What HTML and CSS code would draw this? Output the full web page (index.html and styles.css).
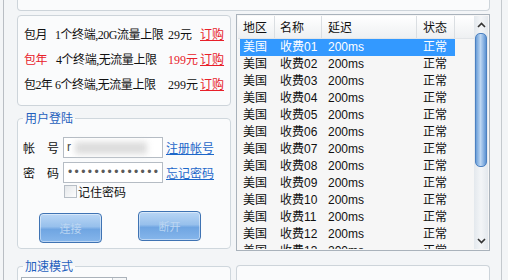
FILE: index.html
```html
<!DOCTYPE html>
<html lang="zh-CN">
<head>
<meta charset="utf-8">
<title>加速器</title>
<link rel="stylesheet" href="styles.css">
</head>
<body>
<div class="win">
  <div class="top-panel"></div>
  <div class="main">
    <div class="left-col">
      <div class="panel plans">
        <div class="plan"><span class="name">包月</span><span class="desc">1个终端,20G流量上限</span><span>29元</span><a class="buy">订购</a></div>
        <div class="plan"><span class="name red">包年</span><span class="desc d2">4个终端,无流量上限</span><span class="red">199元</span><a class="buy">订购</a></div>
        <div class="plan"><span class="name">包2年</span><span class="desc">6个终端,无流量上限</span><span>299元</span><a class="buy">订购</a></div>
      </div>
      <fieldset class="group login">
        <legend>用户登陆</legend>
        <div class="frow"><span class="lbl">帐　号</span><div class="inp">r<span class="blur"></span></div><a class="link">注册帐号</a></div>
        <div class="frow"><span class="lbl">密　码</span><div class="inp pwd">••••••••••••••</div><a class="link">忘记密码</a></div>
        <div class="remember"><span class="cb"></span><span>记住密码</span></div>
        <div class="btns"><span class="btn b1">连接</span><span class="btn b2">断开</span></div>
      </fieldset>
      <fieldset class="group mode">
        <legend>加速模式</legend>
        <div class="combo"><span class="drop"></span></div>
      </fieldset>
    </div>
    <div class="right-col">
      <div class="list">
        <div class="list-body">
          <div class="lhead"><span class="c1">地区</span><span class="c2">名称</span><span class="c3">延迟</span><span class="c4">状态</span><span class="cx"></span></div>
          <div class="lrow sel"><span class="c1">美国</span><span class="c2">收费01</span><span class="c3">200ms</span><span class="c4">正常</span></div>
          <div class="lrow"><span class="c1">美国</span><span class="c2">收费02</span><span class="c3">200ms</span><span class="c4">正常</span></div>
          <div class="lrow"><span class="c1">美国</span><span class="c2">收费03</span><span class="c3">200ms</span><span class="c4">正常</span></div>
          <div class="lrow"><span class="c1">美国</span><span class="c2">收费04</span><span class="c3">200ms</span><span class="c4">正常</span></div>
          <div class="lrow"><span class="c1">美国</span><span class="c2">收费05</span><span class="c3">200ms</span><span class="c4">正常</span></div>
          <div class="lrow"><span class="c1">美国</span><span class="c2">收费06</span><span class="c3">200ms</span><span class="c4">正常</span></div>
          <div class="lrow"><span class="c1">美国</span><span class="c2">收费07</span><span class="c3">200ms</span><span class="c4">正常</span></div>
          <div class="lrow"><span class="c1">美国</span><span class="c2">收费08</span><span class="c3">200ms</span><span class="c4">正常</span></div>
          <div class="lrow"><span class="c1">美国</span><span class="c2">收费09</span><span class="c3">200ms</span><span class="c4">正常</span></div>
          <div class="lrow"><span class="c1">美国</span><span class="c2">收费10</span><span class="c3">200ms</span><span class="c4">正常</span></div>
          <div class="lrow"><span class="c1">美国</span><span class="c2">收费11</span><span class="c3">200ms</span><span class="c4">正常</span></div>
          <div class="lrow"><span class="c1">美国</span><span class="c2">收费12</span><span class="c3">200ms</span><span class="c4">正常</span></div>
          <div class="lrow"><span class="c1">美国</span><span class="c2">收费13</span><span class="c3">200ms</span><span class="c4">正常</span></div>
        </div>
        <div class="sb">
          <div class="sb-btn"><svg width="9" height="6" viewBox="0 0 9 6"><polyline points="1,5 4.5,1.5 8,5" fill="none" stroke="#333" stroke-width="1.6"/></svg></div>
          <div class="sb-thumb"></div>
          <div class="sb-track"></div>
          <div class="sb-btn"><svg width="9" height="6" viewBox="0 0 9 6"><polyline points="1,1 4.5,4.5 8,1" fill="none" stroke="#333" stroke-width="1.6"/></svg></div>
        </div>
      </div>
      <div class="panel rbottom"></div>
    </div>
  </div>
</div>
</body>
</html>
```

FILE: styles.css
```css
* { box-sizing: border-box; }
html, body { margin: 0; padding: 0; }
body {
  background: #f3f5f7;
  font-family: "Liberation Sans", "Noto Sans CJK SC", sans-serif;
  font-size: 12px;
  color: #111;
  width: 508px;
  height: 280px;
  overflow: hidden;
}
.win {
  margin-left: 3px;
  width: 499px;
  height: 280px;
  border-left: 1px solid #b9bec4;
  border-right: 1px solid #c4c9ce;
  padding: 0 11px 0 13px;
  overflow: hidden;
}
.panel {
  border: 1px solid #cdd4da;
  border-radius: 4px;
  background: #fafbfc;
}
.top-panel {
  height: 11px;
  border: 1px solid #cdd4da;
  border-top: none;
  border-radius: 0 0 4px 4px;
  background: #fafbfc;
  margin-bottom: 3px;
}
.main { display: flex; gap: 5px; }
.left-col { width: 214px; display: flex; flex-direction: column; }
.right-col { width: 254px; display: flex; flex-direction: column; }

/* plans */
.plans {
  margin-top: 1px;
  height: 91px;
  padding: 7px 0 0 6px;
  font-family: "Liberation Serif", "Noto Sans CJK SC", serif;
}
.plan {
  display: grid;
  grid-template-columns: 31px 113px 32px auto;
  height: 25px;
  line-height: 25px;
  white-space: nowrap;
}
.plan .name { letter-spacing: -0.6px; }
.plan .desc { letter-spacing: -0.45px; }
.plan .d2 { padding-left: 1px; }
.red { color: #e8202a; }
.buy { color: #e8202a; text-decoration: underline; }

/* group boxes */
.group {
  margin: 5px 0 0 0;
  padding: 0 5px;
  border: 1px solid #cfd7dd;
  border-radius: 4px;
  background: #fafbfc;
  min-width: 0;
}
.group legend {
  padding: 0 2px;
  margin: 0;
  line-height: 14px;
  color: #1f60bd;
  font-size: 12px;
  font-family: "Noto Sans CJK SC", sans-serif;
}
.login { height: 138px; padding-top: 12px; }
.frow {
  display: flex;
  align-items: center;
  height: 21px;
  margin-bottom: 4px;
}
.lbl { width: 36px; margin-right: 4px; white-space: nowrap; }
.inp {
  width: 100px;
  height: 21px;
  border: 1px solid #b5bcc4;
  background: #fff;
  padding-left: 3px;
  line-height: 19px;
  color: #444;
  display: flex;
  align-items: center;
}
.blur {
  display: inline-block;
  width: 72px;
  height: 12px;
  margin-left: 4px;
  background: #dcdcdc;
  filter: blur(3px);
}
.pwd {
  font-size: 12px;
  letter-spacing: 2.4px;
  color: #5a5a5a;
  padding-left: 4px;
}
.link {
  margin-left: 3px;
  color: #1d67c9;
  text-decoration: underline;
  white-space: nowrap;
}
.remember {
  display: flex;
  align-items: center;
  height: 13px;
  margin-left: 41px;
  margin-top: -2px;
}
.cb {
  width: 13px;
  height: 13px;
  border: 1px solid #b7bec6;
  background: linear-gradient(135deg, #e4e7ea, #fdfdfd);
  margin-right: 1px;
}
.btns {
  display: flex;
  align-items: flex-start;
  margin-top: 13px;
  margin-left: 16px;
  gap: 36px;
}
.btn {
  width: 63px;
  height: 30px;
  border: 1px solid #3f73b3;
  border-radius: 4px;
  background: linear-gradient(to bottom, #b9d6f5 0%, #97c0ec 45%, #6fa5e2 55%, #86b6eb 100%);
  box-shadow: inset 0 0 0 1px rgba(255,255,255,0.45);
  color: #bcd6f2;
  display: flex;
  align-items: center;
  justify-content: center;
  font-size: 11px;
}
.b1 { margin-top: 2px; }

.mode { margin-top: 10px; height: 40px; padding-top: 4px; border-bottom: none; border-radius: 4px 4px 0 0; }
.combo {
  width: 106px;
  height: 20px;
  margin-left: -2px;
  border: 1px solid #aab2ba;
  background: #fff;
  display: flex;
  justify-content: flex-end;
}
.drop { width: 14px; border-left: 1px solid #c0c6cc; background: linear-gradient(#f6f7f8, #e2e5e8); }

/* list */
.list {
  width: 254px;
  height: 237px;
  border: 1px solid #a9b2bb;
  padding: 1px;
  display: flex;
  background: #f6f6f6;
}
.list-body { flex: 1; overflow: hidden; }
.lhead {
  display: flex;
  height: 23px;
  background: linear-gradient(#ffffff, #eef0f2);
  border-bottom: 1px solid #e2e5e8;
  line-height: 22px;
  font-family: "Noto Sans CJK SC", sans-serif;
}
.lhead span { border-right: 1px solid #dadee2; }
.lhead .c1 { width: 37px; padding-left: 5px; }
.lhead .cx { flex: 1; border-right: none; }
.lrow {
  display: flex;
  width: 215px;
  height: 17px;
  line-height: 17px;
  margin-left: 2px;
  white-space: nowrap;
}
.lrow.sel { background: #3399ff; color: #fff; }
.c1 { width: 35px; padding-left: 3px; }
.c2 { width: 47px; padding-left: 5px; }
.c3 { width: 95px; padding-left: 6px; }
.c4 { width: 38px; padding-left: 6px; }
.sb {
  width: 14px;
  display: flex;
  flex-direction: column;
  background: linear-gradient(to right, #e3e8ed, #f3f5f7 50%, #e3e8ed);
}
.sb-btn { height: 17px; display: flex; align-items: center; justify-content: center; }
.sb-thumb {
  height: 134px;
  margin: 0 1px;
  border: 1px solid #4c81c1;
  border-radius: 5px;
  background: linear-gradient(to right, #6a9ed8, #bcd6f2 45%, #a3c5eb 60%, #5e93d2);
}
.sb-track { flex: 1; }

.rbottom { margin-top: 14px; height: 40px; border-bottom: none; border-radius: 4px 4px 0 0; }
```
